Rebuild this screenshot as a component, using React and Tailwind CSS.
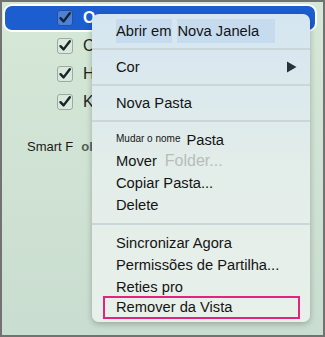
import React from 'react';

const Check = ({ selected }) => (
  <span
    className={`flex h-[16px] w-[16px] items-center justify-center rounded-[3px] border ${
      selected ? 'border-[#2a4f9a] bg-[#4d80d8]' : 'border-[#9aaba0] bg-[#dbe9dc]'
    }`}
  >
    <svg width="14" height="14" viewBox="0 0 14 14">
      <path d="M2.5 7.2 L5.6 10.4 L11.8 2.2" fill="none" stroke="#17242a" strokeWidth="2.4" strokeLinecap="round" strokeLinejoin="round" />
    </svg>
  </span>
);

const Sep = () => <div className="h-[2px] bg-[#cbd7d6]" />;

const App = () => {
  const rows = ['C', 'H', 'K'];

  return (
    <div className="relative h-[337px] w-[325px] overflow-hidden border-2 border-[#727272] bg-gradient-to-b from-[#d6e8d7] to-[#c9ddd0] font-['Liberation_Sans',Arial,sans-serif]">
      {/* list behind the menu */}
      <div className="pt-[2px]">
        <div className="ml-[1px] mr-[6px] flex h-[28px] items-center rounded-[9px] border-2 border-white bg-[#1c5ed0] pl-[52px]">
          <Check selected />
          <span className="ml-[10px] text-[16px] font-bold text-white">O</span>
        </div>
        {rows.map((r) => (
          <div key={r} className="flex h-[28px] items-center pl-[55px]">
            <Check />
            <span className="ml-[10px] text-[16px] text-[#1a2420]">{r}</span>
          </div>
        ))}
        <div className="mt-[21px] flex items-center pl-[25px] text-[13px]">
          <span className="text-[#1a1a1a]">Smart F</span>
          <span className="ml-[8px] font-bold text-[#50605a]">old</span>
        </div>
      </div>

      {/* context menu */}
      <div className="absolute left-[90px] top-[12px] w-[218px] rounded-[7px] bg-gradient-to-b from-[#d5e6f1] via-[#e3ede9] to-[#e8f0ea] pb-[3px] text-[14.7px] text-[#141414] shadow-[0_2px_6px_rgba(0,0,0,0.25)]">
        <div className="flex h-[34px] items-center pl-[24px]">
          <span className="bg-[#c6dcee] py-[1px]">Abrir em</span>
          <span className="ml-[5px] bg-[#c6dcee] py-[1px] pr-[16px] pl-[1px]">Nova Janela</span>
        </div>
        <Sep />
        <div className="flex h-[34px] items-center justify-between pl-[24px] pr-[13px]">
          <span>Cor</span>
          <svg width="11" height="12" viewBox="0 0 11 12">
            <path d="M1 0.5 L10.5 6 L1 11.5 Z" fill="#26333a" />
          </svg>
        </div>
        <Sep />
        <div className="flex h-[34px] items-center pl-[24px]">Nova Pasta</div>
        <Sep />
        <div className="pt-[6px] pb-[7px]">
          <div className="flex h-[22px] items-center pl-[24px]">
            <span className="text-[10px] leading-none">Mudar o nome</span>
            <span className="ml-[6px] mt-[3px]">Pasta</span>
          </div>
          <div className="flex h-[22px] items-center pl-[24px]">
            <span>Mover</span>
            <span className="ml-[8px] text-[16px] text-[#b6beba]">Folder...</span>
          </div>
          <div className="flex h-[22px] items-center pl-[24px]">Copiar Pasta...</div>
          <div className="flex h-[22px] items-center pl-[24px]">Delete</div>
        </div>
        <Sep />
        <div className="pt-[7px]">
          <div className="flex h-[22px] items-center pl-[24px]">Sincronizar Agora</div>
          <div className="flex h-[22px] items-center pl-[24px]">Permissões de Partilha...</div>
          <div className="flex h-[22px] items-center pl-[24px]">Reties pro</div>
          <div className="-mt-[2px] ml-[11px] flex h-[23px] w-[197px] items-center border-2 border-[#e3237f] pl-[11px]">
            Remover da Vista
          </div>
        </div>
      </div>
    </div>
  );
};

export default App;
